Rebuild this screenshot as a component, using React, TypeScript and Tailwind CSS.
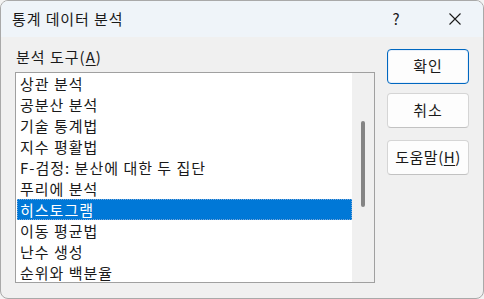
import React from "react";

const tools = [
    "상관 분석",
    "공분산 분석",
    "기술 통계법",
    "지수 평활법",
    "F-검정: 분산에 대한 두 집단",
    "푸리에 분석",
    "히스토그램",
    "이동 평균법",
    "난수 생성",
    "순위와 백분율",
];

const font = { fontFamily: '"Noto Sans CJK KR", "Noto Sans", sans-serif' };

export default function App() {
    const selected = 6;

    return (
        <div className="w-[484px] h-[299px] bg-[#f3f3f3]" style={font}>
            <div className="w-[484px] h-[299px] flex flex-col rounded-lg border border-[#a9a9a9] overflow-hidden bg-[#f0f0f0]">
                {/* title bar */}
                <div className="h-[36px] shrink-0 flex items-center bg-[#eff4f9] text-[#1a1a1a]">
                    <span className="pl-[11px] text-[15px] tracking-[0.9px] flex-1">통계 데이터 분석</span>
                    <span className="w-[30px] text-center text-[15px] mr-[37px]">?</span>
                    <svg width="14" height="14" viewBox="0 0 14 14" className="mr-[21px]">
                        <path d="M1.5 1.5 L12.5 12.5 M12.5 1.5 L1.5 12.5" stroke="#1a1a1a" strokeWidth="1.1" />
                    </svg>
                </div>

                <div className="flex flex-1 pl-[14px] pr-[13px]">
                    <div className="w-[360px] flex flex-col">
                        <div className="h-[35px] flex items-center pt-[5px] pl-[1px] text-[15px] tracking-[1px] text-[#1a1a1a]">
                            분석 도구(<span className="underline underline-offset-2">A</span>)
                        </div>
                        <div className="w-[360px] h-[211px] border border-[#a0a0a0] bg-white flex overflow-hidden">
                            <div className="flex-1 pl-[1px]">
                                {tools.map((t, i) => (
                                    <div
                                        key={t}
                                        className={`h-[21px] pl-[3px] flex items-center text-[15px] tracking-[1px] leading-none whitespace-nowrap ${
                                            i === selected
                                                ? "bg-[#0078d7] text-white outline outline-1 outline-dotted outline-[#7aa7d8] -outline-offset-1"
                                                : "text-[#1a1a1a]"
                                        }`}
                                    >
                                        {t}
                                    </div>
                                ))}
                            </div>
                            <div className="w-[22px] bg-[#f0f0f0] flex justify-center pt-[48px]">
                                <div className="w-[4px] h-[86px] rounded-full bg-[#858585]" />
                            </div>
                        </div>
                    </div>

                    <div className="flex flex-col gap-[9px] ml-[12px] pt-[12px]">
                        <button className="w-[82px] h-[35px] rounded-[4px] border border-[#0067c0] bg-[#fdfdfd] text-[15px] tracking-[1px] text-[#1a1a1a] shadow-[inset_0_0_0_1px_#e8f0fa]">
                            확인
                        </button>
                        <button className="w-[82px] h-[35px] rounded-[4px] border border-[#d5d5d5] border-b-[#c2c2c2] bg-[#fdfdfd] text-[15px] tracking-[1px] text-[#1a1a1a]">
                            취소
                        </button>
                        <button className="mt-[3px] w-[82px] h-[35px] rounded-[4px] border border-[#d5d5d5] border-b-[#c2c2c2] bg-[#fdfdfd] text-[15px] tracking-[0.5px] text-[#1a1a1a]">
                            도움말(<span className="underline underline-offset-2">H</span>)
                        </button>
                    </div>
                </div>
            </div>
        </div>
    );
}
